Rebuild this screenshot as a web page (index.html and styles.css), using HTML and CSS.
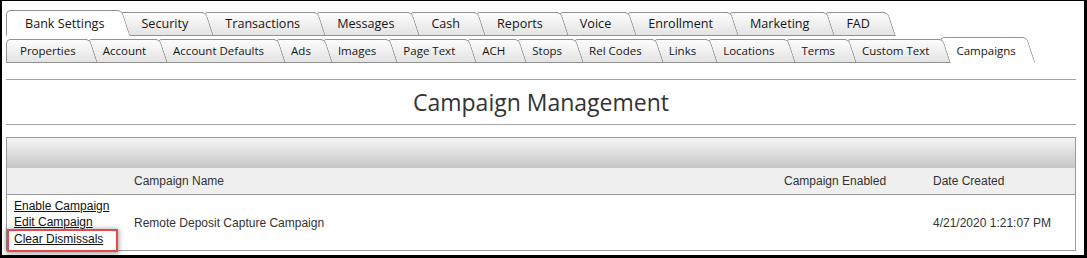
FILE: index.html
```html
<!DOCTYPE html>
<html lang="en">
<head>
<meta charset="utf-8">
<title>Campaign Management</title>
<link rel="stylesheet" href="styles.css">
</head>
<body>
<div class="page">
  <nav class="tabs tabs-main">
    <a class="tab active"><span class="tab-label">Bank Settings</span></a>
    <a class="tab"><span class="tab-label">Security</span></a>
    <a class="tab"><span class="tab-label">Transactions</span></a>
    <a class="tab"><span class="tab-label">Messages</span></a>
    <a class="tab"><span class="tab-label">Cash</span></a>
    <a class="tab"><span class="tab-label">Reports</span></a>
    <a class="tab"><span class="tab-label">Voice</span></a>
    <a class="tab"><span class="tab-label">Enrollment</span></a>
    <a class="tab"><span class="tab-label">Marketing</span></a>
    <a class="tab"><span class="tab-label">FAD</span></a>
  </nav>
  <nav class="tabs tabs-sub">
    <a class="tab"><span class="tab-label">Properties</span></a>
    <a class="tab"><span class="tab-label">Account</span></a>
    <a class="tab"><span class="tab-label">Account Defaults</span></a>
    <a class="tab"><span class="tab-label">Ads</span></a>
    <a class="tab"><span class="tab-label">Images</span></a>
    <a class="tab"><span class="tab-label">Page Text</span></a>
    <a class="tab"><span class="tab-label">ACH</span></a>
    <a class="tab"><span class="tab-label">Stops</span></a>
    <a class="tab"><span class="tab-label">Rel Codes</span></a>
    <a class="tab"><span class="tab-label">Links</span></a>
    <a class="tab"><span class="tab-label">Locations</span></a>
    <a class="tab"><span class="tab-label">Terms</span></a>
    <a class="tab"><span class="tab-label">Custom Text</span></a>
    <a class="tab active"><span class="tab-label">Campaigns</span></a>
  </nav>
  <div class="rule rule-first"></div>
  <h1 class="title">Campaign Management</h1>
  <div class="rule"></div>
  <table class="grid">
    <colgroup>
      <col class="c-actions"><col class="c-name"><col class="c-enabled"><col class="c-date">
    </colgroup>
    <thead>
      <tr class="grid-band"><th colspan="4"></th></tr>
      <tr class="grid-head">
        <th></th>
        <th>Campaign Name</th>
        <th>Campaign Enabled</th>
        <th>Date Created</th>
      </tr>
    </thead>
    <tbody>
      <tr class="grid-row">
        <td class="actions">
          <a class="action">Enable Campaign</a>
          <a class="action">Edit Campaign</a>
          <a class="action flagged">Clear Dismissals</a>
        </td>
        <td>Remote Deposit Capture Campaign</td>
        <td></td>
        <td>4/21/2020 1:21:07 PM</td>
      </tr>
    </tbody>
  </table>
</div>
</body>
</html>
```
FILE: styles.css
```css
html, body {
  margin: 0;
  padding: 0;
  background: #fff;
}

.page {
  box-sizing: border-box;
  width: 1087px;
  height: 258px;
  border-style: solid;
  border-color: #000;
  border-width: 1px 3px 3px 2px;
  padding: 9px 8px 0 4px;
  overflow: hidden;
}

/* ---------- tabs ---------- */
.tabs {
  display: flex;
  align-items: flex-end;
  height: 26px;
}

.tabs-sub {
  margin-top: 1px;
}

.tab {
  position: relative;
  box-sizing: border-box;
  display: block;
  height: 24px;
  border: 1px solid #929292;
  border-right: none;
  border-radius: 5px 0 0 0;
  background: linear-gradient(#fdfdfd, #e3e3e3);
  color: #161616;
  font-family: "Open Sans", "Noto Sans", sans-serif;
  white-space: nowrap;
  cursor: pointer;
}

.tab-label {
  position: relative;
  z-index: 2;
}

.tab::after {
  content: "";
  position: absolute;
  z-index: 1;
  top: -1px;
  bottom: -1px;
  right: -3px;
  width: 22px;
  box-sizing: border-box;
  border-top: 1px solid #929292;
  border-right: 1px solid #929292;
  border-bottom: 1px solid #929292;
  border-radius: 0 5px 0 0;
  background: inherit;
  transform: skewX(18deg);
  transform-origin: 0 0;
}

.tab.active {
  height: 26px;
  background: #fff;
  border-bottom-color: #fff;
}

.tab.active::after {
  border-bottom-color: #fff;
}

.tabs-main .tab {
  font-size: 12.6px;
  line-height: 22px;
  padding: 0 15px 0 21px;
}

.tabs-main .tab.active {
  line-height: 25px;
}

.tabs-main .tab:first-child {
  padding-left: 18px;
}

.tabs-sub .tab {
  font-size: 11.5px;
  line-height: 22px;
  padding: 0 11px 0 15px;
}

.tabs-sub .tab.active {
  line-height: 25px;
  padding-right: 8px;
}

.tabs-sub .tab:first-child {
  padding-left: 13px;
}

/* ---------- heading ---------- */
.rule {
  border-top: 1px solid #a3a3a3;
  height: 0;
}

.rule-first {
  margin-top: 16px;
}

.title {
  margin: 0;
  height: 44px;
  font-family: "Open Sans", "Noto Sans", sans-serif;
  font-weight: 400;
  font-size: 23px;
  line-height: 44px;
  color: #333;
  text-align: center;
}

/* ---------- grid ---------- */
.grid {
  box-sizing: border-box;
  width: 1070px;
  margin-top: 12px;
  border: 1px solid #9a9a9a;
  border-collapse: separate;
  border-spacing: 0;
  table-layout: fixed;
  font-family: "Liberation Sans", Arial, sans-serif;
  font-size: 12px;
  color: #333;
}

.c-actions { width: 120px; }
.c-name { width: 650px; }
.c-enabled { width: 149px; }
.c-date { width: 149px; }

.grid th,
.grid td {
  padding: 0 7px;
  text-align: left;
  font-weight: 400;
}

.grid-band th {
  height: 30px;
  padding: 0;
  background: linear-gradient(#f6f6f6, #c5c5c5);
}

.grid-head th {
  height: 26px;
  background: #efefef;
  border-bottom: 1px solid #9a9a9a;
}

.grid-row td {
  height: 55px;
  vertical-align: middle;
}

.action {
  position: relative;
  display: block;
  width: max-content;
  line-height: 16.5px;
  color: #111;
  text-decoration: underline;
  cursor: pointer;
}

.flagged::after {
  content: "";
  position: absolute;
  left: -7px;
  right: -15px;
  top: -2px;
  bottom: -5px;
  border: 2px solid #e8474c;
  box-shadow: 0 1px 5px 1px rgba(0, 0, 0, 0.35);
}
```
